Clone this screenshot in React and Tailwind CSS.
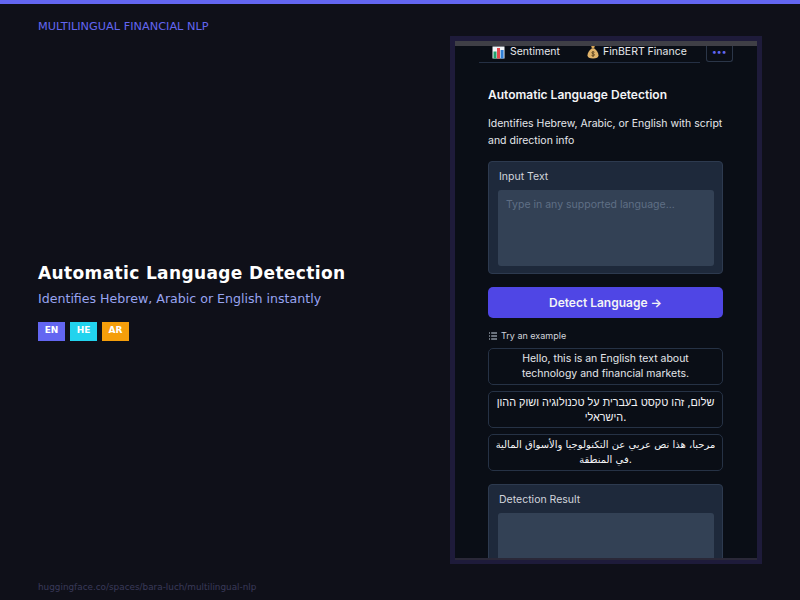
const dejavu = "font-['DejaVu_Sans',sans-serif]";

function ChartIcon() {
  return (
    <svg width="13" height="13" viewBox="0 0 13 13" aria-hidden="true">
      <rect x="0.5" y="0.5" width="12" height="12" fill="#f1f5f9" />
      <rect x="1.5" y="5.5" width="3" height="7" fill="#22a06b" />
      <rect x="5" y="2" width="3" height="10.5" fill="#e5484d" />
      <rect x="8.6" y="4" width="3" height="8.5" fill="#2f7fd6" />
    </svg>
  );
}

function BagIcon() {
  return (
    <svg width="12" height="14" viewBox="0 0 12 14" aria-hidden="true">
      <path d="M4 0.5h4L7 3.4h-2z" fill="#d8a657" />
      <path d="M4.6 3.6h2.8c2.4 2 4.1 4.4 4.1 6.6 0 2.4-2 3.3-5.5 3.3S.5 12.6.5 10.2c0-2.2 1.700-4.600 4.100-6.600z" fill="#e0b36a" />
      <path d="M7.500 7.300c-.5-.6-2.700-.7-2.700.5 0 1.300 2.700.7 2.700 2.100 0 1.200-2.300 1.100-3 .4M6 6v6" fill="none" stroke="#5b4420" strokeWidth="0.9" />
    </svg>
  );
}

function ListIcon() {
  return (
    <svg width="8" height="8" viewBox="0 0 8 8" aria-hidden="true" className="ml-[1px] text-slate-300">
      <path d="M0 1h1M0 4h1M0 7h1M2.200 1H8M2.200 4H8M2.200 7H8" stroke="currentColor" strokeWidth="1" />
    </svg>
  );
}

function Example({ children, className }) {
  return (
    <button className={`h-[37px] w-full rounded-[5px] border border-[#263245] bg-[#0a0e16] px-[5px] text-center leading-[14.700px] text-[#e5e7eb] ${className}`}>
      {children}
    </button>
  );
}

function Field({ label, height, placeholder, className }) {
  return (
    <div className={`rounded-[4px] border border-[#2d3a4f] bg-[#1e293b] pl-[9px] pr-[8px] pt-[8px] ${className}`}>
      <div className="pl-px text-[10.5px] leading-[14px] text-[#d1d5db]">{label}</div>
      <div className={`mt-[6px] rounded-[3px] bg-[#334155] px-2 pt-[8px] text-[10.5px] leading-[14px] text-[#5f6f85] ${height}`}>
        {placeholder}
      </div>
    </div>
  );
}

export default function App() {
  return (
    <div className="flex h-[600px] w-[800px] flex-col overflow-hidden bg-[#0f1019]">
      <div className="h-1 bg-[#6366f1]" />
      <div className="flex flex-1">
        <div className={`flex w-[450px] flex-col pb-[7px] pl-[38px] pt-[16px] ${dejavu}`}>
          <div className="text-[11.3px] leading-[14px] text-[#6366f1]">MULTILINGUAL FINANCIAL NLP</div>
          <div className="flex flex-1 flex-col justify-center pb-[13px]">
            <h1 className="text-[17px] font-bold leading-[22px] tracking-[0.37px] text-white">Automatic Language Detection</h1>
            <p className="mt-[7px] text-[12.6px] leading-[16px] text-[#98a4f0]">Identifies Hebrew, Arabic or English instantly</p>
            <div className="mt-[15px] flex gap-[5px]">
              <span className="flex h-[19px] w-[27px] items-center justify-center bg-[#6366f1] text-[9px] font-bold text-white">EN</span>
              <span className="flex h-[19px] w-[27px] items-center justify-center bg-[#22d3ee] text-[9px] font-bold text-white">HE</span>
              <span className="flex h-[19px] w-[27px] items-center justify-center bg-[#f59e0b] text-[9px] font-bold text-white">AR</span>
            </div>
          </div>
          <div className="text-[8.85px] leading-[12px] text-[#3a3a5a]">huggingface.co/spaces/bara-luch/multilingual-nlp</div>
        </div>

        <div className="mt-[32px] flex h-[528px] w-[312px] flex-col overflow-hidden border-x-[5px] border-b-[4px] border-t-[5px] border-[#1e1b3a] bg-[#0a0e16] font-['Inter',sans-serif]">
          <div className="h-[5px] shrink-0 bg-[#3f3f46]" />
          <div className="min-h-0 flex-1 overflow-hidden">
            <div className="flex items-start pl-[24px]">
              <div className="flex h-[17px] w-[221px] items-center gap-[27px] whitespace-nowrap border-b border-[#253044] pb-[4px] pl-[13px] text-[10.5px] leading-[14px] text-[#e5e7eb]">
                <span className="flex items-center gap-[5px]"><ChartIcon />Sentiment</span>
                <span className="flex items-center gap-[4px]"><BagIcon />FinBERT Finance</span>
              </div>
              <div className="ml-[6px] flex h-[16px] w-[27px] items-center justify-center rounded-b-[3px] border-x border-b border-[#2b3648] pb-[4px] text-[9px] font-bold leading-none tracking-[0.5px] text-[#6366f1]">•••</div>
            </div>

            <div className="pl-[33px] pr-[34px] pt-[24px]">
              <h2 className="text-[12px] font-semibold leading-[16px] text-[#f3f4f6]">Automatic Language Detection</h2>
              <p className="mt-[12px] text-[10.5px] leading-[17px] text-[#e5e7eb]">Identifies Hebrew, Arabic, or English with script and direction info</p>

              <Field className="mt-[12px] h-[113px]" label="Input Text" height="h-[76px]" placeholder="Type in any supported language..." />

              <button className="mt-[13px] block h-[31px] w-full rounded-[5px] bg-[#4f46e5] text-[12px] font-semibold text-[#f3f4f6]">Detect Language →</button>

              <div className="mt-[12px] flex h-[12px] items-center gap-[4px] text-[9px] text-[#d1d5db]"><ListIcon />Try an example</div>

              <div className="mt-[6px] flex flex-col gap-[6px]">
                <Example className="text-[10.5px]">Hello, this is an English text about technology and financial markets.</Example>
                <Example className="text-[10.85px] text-[#f3f4f6]">שלום, זהו טקסט בעברית על טכנולוגיה ושוק ההון הישראלי.</Example>
                <Example className="font-['DejaVu_Sans',sans-serif] text-[10px] text-[#f3f4f6]">مرحبا، هذا نص عربي عن التكنولوجيا والأسواق المالية في المنطقة.</Example>
              </div>

              <Field className="mt-[13px] h-[113px]" label="Detection Result" height="h-[76px]" />
            </div>
          </div>
          <div className="h-[2px] shrink-0 bg-[#2a2838]" />
        </div>
      </div>
    </div>
  );
}
